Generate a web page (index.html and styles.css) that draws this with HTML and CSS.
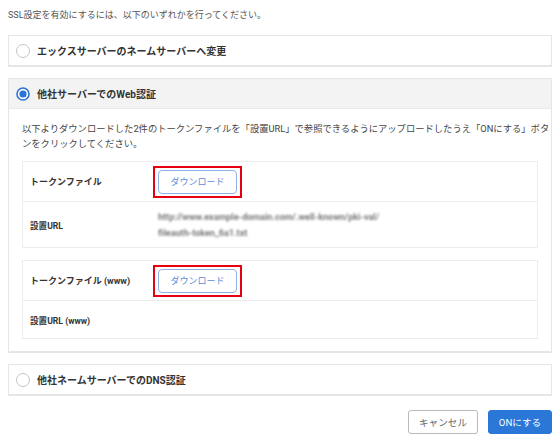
FILE: index.html
```html
<!DOCTYPE html>
<html lang="ja">
<head>
<meta charset="utf-8">
<title>SSL設定</title>
<link rel="stylesheet" href="styles.css">
</head>
<body>
<p class="intro">SSL設定を有効にするには、以下のいずれかを行ってください。</p>

<div class="card">
  <div class="card-head">
    <svg class="radio" width="14" height="14" viewBox="0 0 14 14"><circle cx="7" cy="7" r="6.5" fill="#fff" stroke="#c4c4c4"/></svg>
    <span class="title">エックスサーバーのネームサーバーへ変更</span>
  </div>
</div>

<div class="card">
  <div class="card-head active">
    <svg class="radio" width="14" height="14" viewBox="0 0 14 14"><circle cx="7" cy="7" r="6" fill="#fff" stroke="#2d72d6" stroke-width="1.6"/><circle cx="7" cy="7" r="3.6" fill="#2d72d6"/></svg>
    <span class="title">他社サーバーでのWeb認証</span>
  </div>
  <div class="card-body">
    <p class="desc">以下よりダウンロードした2件のトークンファイルを「設置URL」で参照できるようにアップロードしたうえ「ONにする」ボタ<br>ンをクリックしてください。</p>

    <div class="table">
      <div class="row row-btn">
        <div class="label">トークンファイル</div>
        <div class="value"><span class="mark"><button class="dl">ダウンロード</button></span></div>
      </div>
      <div class="row row-url">
        <div class="label small">設置URL</div>
        <div class="value"><span class="url">http://www.example-domain.com/.well-known/pki-val/<br>fileauth-token_6a1.txt</span></div>
      </div>
    </div>

    <div class="table">
      <div class="row row-btn">
        <div class="label">トークンファイル (www)</div>
        <div class="value"><span class="mark"><button class="dl">ダウンロード</button></span></div>
      </div>
      <div class="row row-plain">
        <div class="label small">設置URL (www)</div>
        <div class="value"></div>
      </div>
    </div>
  </div>
</div>

<div class="card">
  <div class="card-head">
    <svg class="radio" width="14" height="14" viewBox="0 0 14 14"><circle cx="7" cy="7" r="6.5" fill="#fff" stroke="#c4c4c4"/></svg>
    <span class="title">他社ネームサーバーでのDNS認証</span>
  </div>
</div>

<div class="actions">
  <button class="btn cancel">キャンセル</button>
  <button class="btn primary">ONにする</button>
</div>
</body>
</html>
```

FILE: styles.css
```css
* { box-sizing: border-box; }
html, body { background: #fff; }
body {
  margin: 8px;
  width: 544px;
  font-family: Roboto, "Noto Sans CJK JP", sans-serif;
  color: #333;
}
.intro {
  margin: 0 0 12px;
  height: 15px;
  font-size: 9px;
  line-height: 15px;
  color: #555;
}
.card {
  background: #fff;
  border: 1px solid #e6e6e6;
  border-bottom-width: 2px;
  margin-bottom: 11px;
}
.card-head {
  display: flex;
  align-items: center;
  gap: 7px;
  height: 29px;
  padding-left: 7px;
}
.card-head.active {
  background: #f3f3f3;
  border-bottom: 1px solid #e9e9e9;
  height: 30px;
}
.radio { flex: none; display: block; }
.title {
  font-size: 10px;
  font-weight: 700;
  color: #333;
}
.card-body {
  padding: 12px 13px 12px;
}
.desc {
  margin: 0 0 10px;
  height: 30px;
  font-size: 9.3px;
  line-height: 15px;
  color: #444;
  white-space: nowrap;
}
.table {
  border: 1px solid #ececec;
  margin-bottom: 12px;
}
.table:last-child { margin-bottom: 0; }
.row {
  display: flex;
  align-items: center;
  border-bottom: 1px solid #ececec;
}
.row:last-child { border-bottom: none; }
.row-btn { height: 40px; }
.row-url { height: 45px; }
.row-plain { height: 37px; }
.label {
  width: 130px;
  flex: none;
  padding-left: 7px;
  font-size: 9px;
  font-weight: 700;
  color: #333;
}
.label.small { font-size: 8.6px; }
.value { flex: 1; }
.mark {
  display: inline-block;
  border: 2px solid #e60012;
  padding: 2px 3px;
  vertical-align: middle;
}
.dl {
  display: block;
  width: 79px;
  height: 24px;
  border: 1px solid #8fb2e6;
  border-radius: 4px;
  background: #fff;
  color: #5a8ddb;
  font-family: Roboto, "Noto Sans CJK JP", sans-serif;
  font-size: 9px;
  padding: 0;
}
.url {
  display: block;
  margin-left: 5px;
  font-size: 9px;
  font-weight: 700;
  line-height: 16px;
  color: #7a7a7a;
  filter: blur(1.1px);
}
.actions {
  display: flex;
  justify-content: flex-end;
  gap: 10px;
  margin-top: 14px;
}
.btn {
  height: 24px;
  border-radius: 3px;
  font-family: Roboto, "Noto Sans CJK JP", sans-serif;
  font-size: 9.6px;
  padding: 0;
}
.cancel {
  width: 70px;
  background: #fff;
  border: 1px solid #b9b9b9;
  color: #666;
}
.primary {
  width: 64px;
  background: #2b77d8;
  border: 1px solid #2b77d8;
  color: #fff;
}
```
